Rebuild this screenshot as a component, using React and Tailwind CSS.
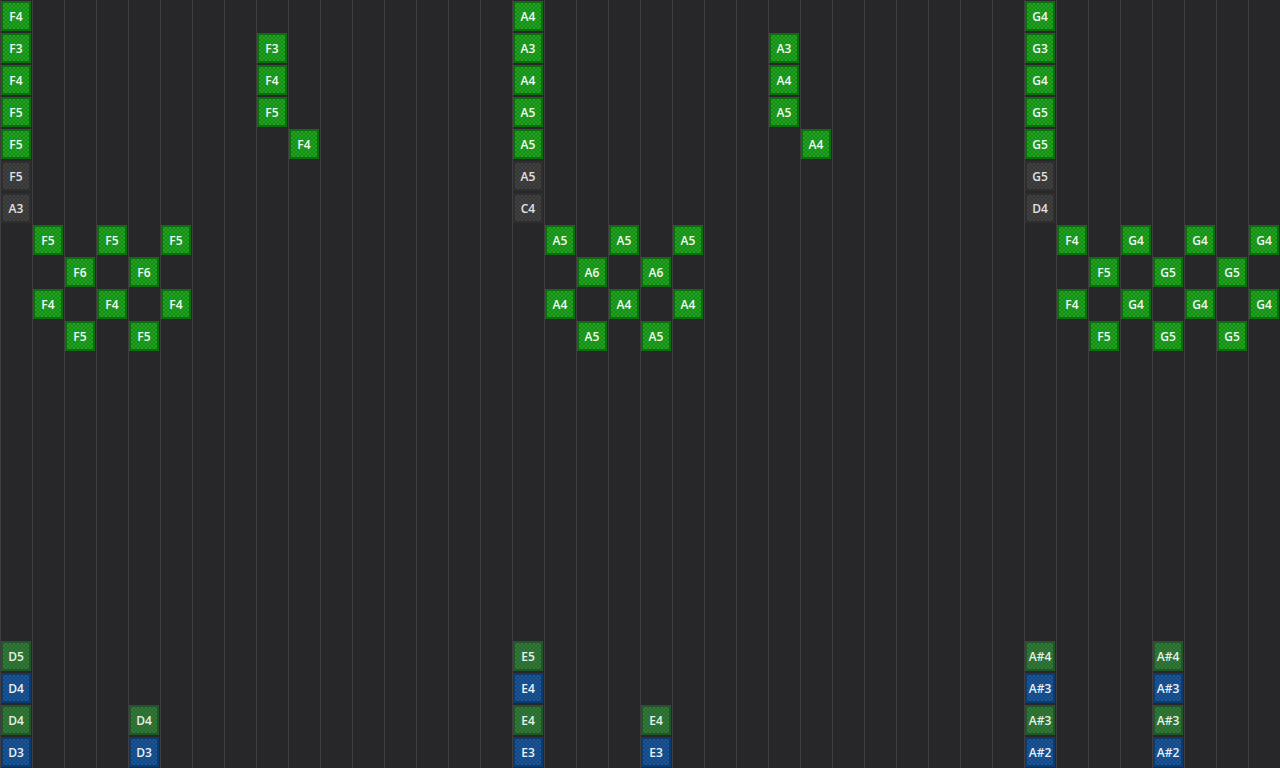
import React from 'react';

const COLS = 40;
const ROWS = 24;

// kind: g = active green, m = muted green, b = blue, x = gray
const tone = {
  g: 'border-[#0f6d10] bg-[#1c9a1d] bg-[image:repeating-conic-gradient(#1fa321_0%_25%,#178b18_0%_50%)] text-[#f2f8f2]',
  m: 'border-[#23552a] bg-[#2d7233] bg-[image:repeating-conic-gradient(#317a37_0%_25%,#29682e_0%_50%)] text-[#e8f1e8]',
  b: 'border-[#0f3a6c] bg-[#18508f] bg-[image:repeating-conic-gradient(#1b5699_0%_25%,#144781_0%_50%)] text-[#eaf0f8]',
  x: 'border-[#2f2f30] bg-[#3b3b3c] bg-[image:repeating-conic-gradient(#414142_0%_25%,#363637_0%_50%)] text-[#e2e2e2]',
};

const stack = (labels, kinds) => labels.map((l, i) => [i, l, kinds[i]]);
const bass = (hi, lo) => [[20, hi[0], 'm'], [21, hi[1], 'b'], [22, lo[0], 'm'], [23, lo[1], 'b']];

const notes = {
  0: [...stack(['F4', 'F3', 'F4', 'F5', 'F5', 'F5', 'A3'], 'gggggxx'), ...bass(['D5', 'D4'], ['D4', 'D3'])],
  1: [[7, 'F5', 'g'], [9, 'F4', 'g']],
  2: [[8, 'F6', 'g'], [10, 'F5', 'g']],
  3: [[7, 'F5', 'g'], [9, 'F4', 'g']],
  4: [[8, 'F6', 'g'], [10, 'F5', 'g'], [22, 'D4', 'm'], [23, 'D3', 'b']],
  5: [[7, 'F5', 'g'], [9, 'F4', 'g']],
  8: [[1, 'F3', 'g'], [2, 'F4', 'g'], [3, 'F5', 'g']],
  9: [[4, 'F4', 'g']],
  16: [...stack(['A4', 'A3', 'A4', 'A5', 'A5', 'A5', 'C4'], 'gggggxx'), ...bass(['E5', 'E4'], ['E4', 'E3'])],
  17: [[7, 'A5', 'g'], [9, 'A4', 'g']],
  18: [[8, 'A6', 'g'], [10, 'A5', 'g']],
  19: [[7, 'A5', 'g'], [9, 'A4', 'g']],
  20: [[8, 'A6', 'g'], [10, 'A5', 'g'], [22, 'E4', 'm'], [23, 'E3', 'b']],
  21: [[7, 'A5', 'g'], [9, 'A4', 'g']],
  24: [[1, 'A3', 'g'], [2, 'A4', 'g'], [3, 'A5', 'g']],
  25: [[4, 'A4', 'g']],
  32: [...stack(['G4', 'G3', 'G4', 'G5', 'G5', 'G5', 'D4'], 'gggggxx'), ...bass(['A#4', 'A#3'], ['A#3', 'A#2'])],
  33: [[7, 'F4', 'g'], [9, 'F4', 'g']],
  34: [[8, 'F5', 'g'], [10, 'F5', 'g']],
  35: [[7, 'G4', 'g'], [9, 'G4', 'g']],
  36: [[8, 'G5', 'g'], [10, 'G5', 'g'], ...bass(['A#4', 'A#3'], ['A#3', 'A#2'])],
  37: [[7, 'G4', 'g'], [9, 'G4', 'g']],
  38: [[8, 'G5', 'g'], [10, 'G5', 'g']],
  39: [[7, 'G4', 'g'], [9, 'G4', 'g']],
};

function Note({ label, kind }) {
  return (
    <div
      className={`w-[30px] h-[30px] border-2 pt-0.5 bg-[length:4px_4px] flex items-center justify-center text-[12px] font-semibold leading-none ${tone[kind]}`}
    >
      {label}
    </div>
  );
}

function Column({ index }) {
  const byRow = {};
  (notes[index] || []).forEach(([r, label, kind]) => {
    byRow[r] = { label, kind };
  });
  return (
    <div className="w-8 shrink-0 border-l border-[#3e3e40] flex flex-col">
      {Array.from({ length: ROWS }, (_, r) => (
        <div key={r} className="h-8 pt-px">
          {byRow[r] && <Note {...byRow[r]} />}
        </div>
      ))}
    </div>
  );
}

export default function App() {
  return (
    <div
      className="w-[1280px] h-[768px] overflow-hidden bg-[#272729] flex"
      style={{ fontFamily: '"Open Sans", "Noto Sans", sans-serif' }}
    >
      {Array.from({ length: COLS }, (_, c) => (
        <Column key={c} index={c} />
      ))}
    </div>
  );
}
